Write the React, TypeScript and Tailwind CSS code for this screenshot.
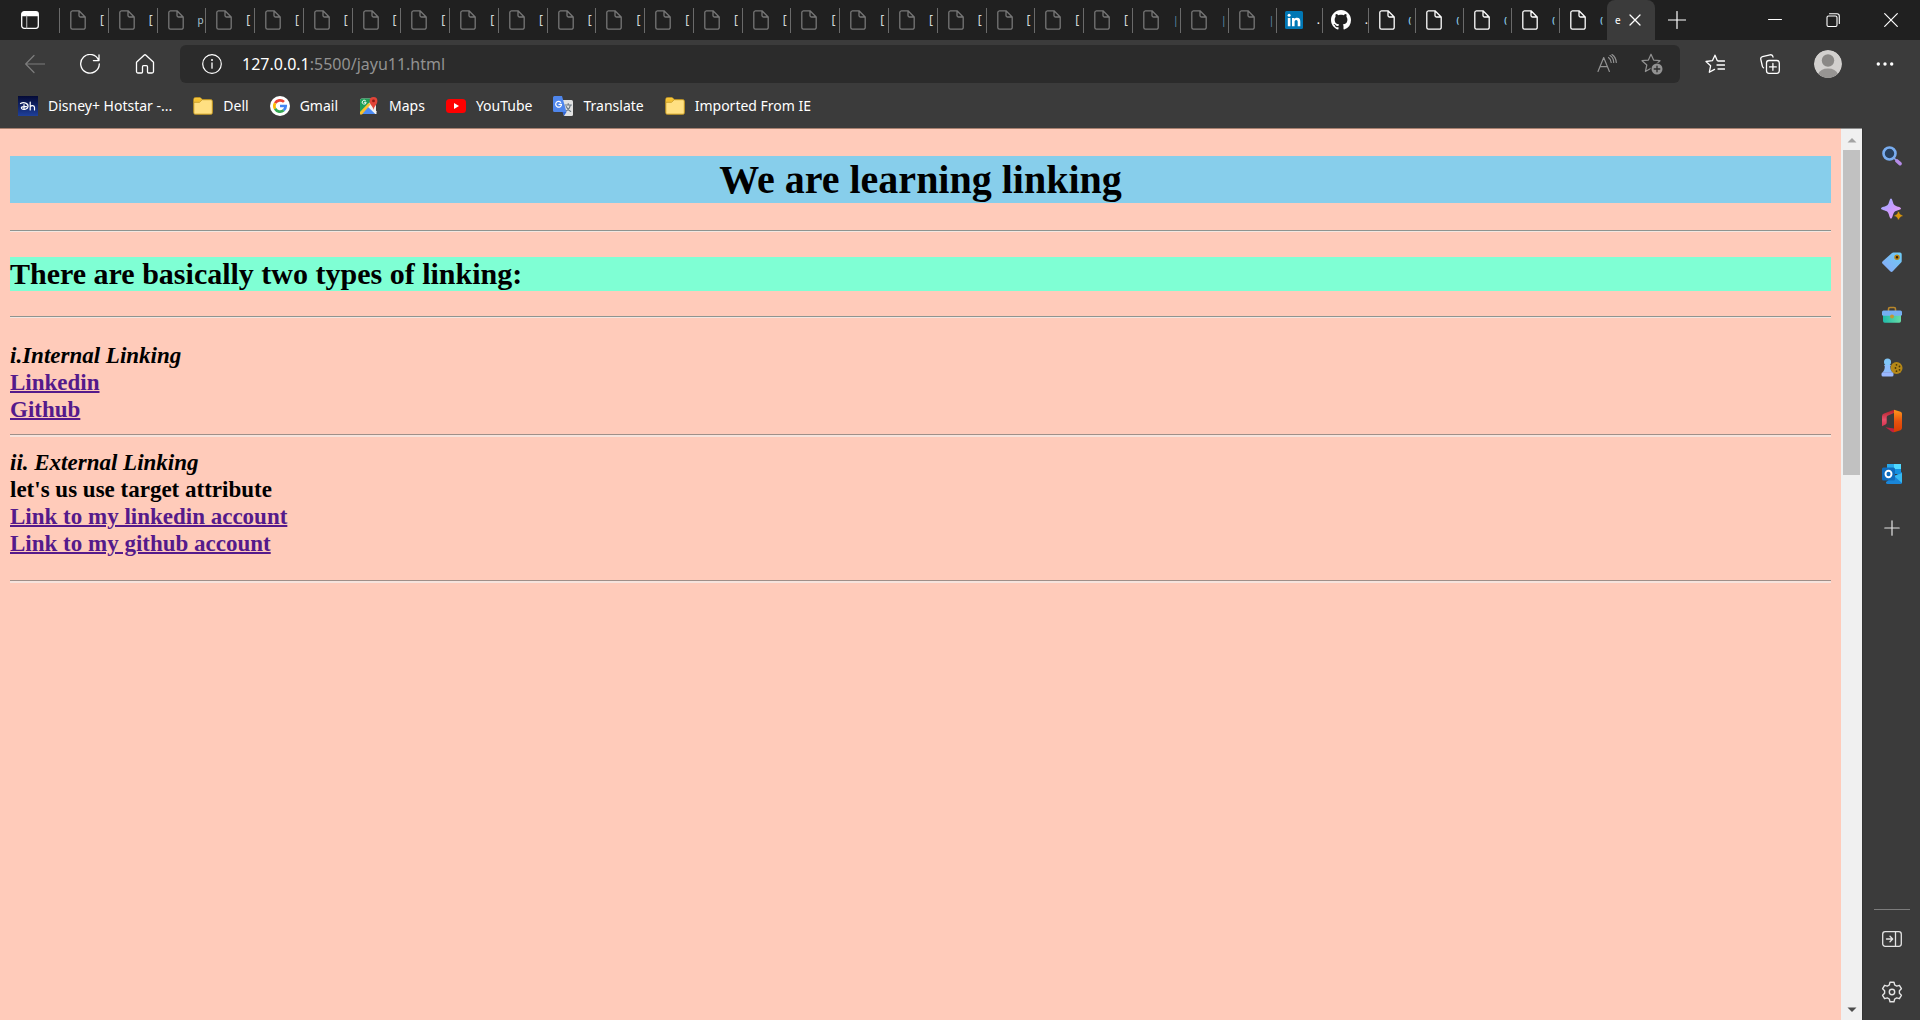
import type { ReactNode } from "react";

function Svg({ box = 20, className = "size-5", children }: { box?: number; className?: string; children: ReactNode }) {
  return (
    <svg viewBox={`0 0 ${box} ${box}`} className={className} fill="none" strokeLinecap="round" strokeLinejoin="round" aria-hidden="true">
      {children}
    </svg>
  );
}

function PageIcon() {
  return (
    <svg viewBox="0 0 16 20" className="h-5 w-4 shrink-0" fill="none" stroke="currentColor" strokeWidth="1.3" strokeLinejoin="round" aria-hidden="true">
      <path d="M2.5.8H9L15.2 7v10.4a1.8 1.8 0 0 1-1.8 1.8H2.5A1.8 1.8 0 0 1 .8 17.4V2.6A1.8 1.8 0 0 1 2.5.8ZM9 .8v4.6A1.6 1.6 0 0 0 10.600 7h4.600" />
    </svg>
  );
}

function LinkedinIcon() {
  return (
    <Svg box={18} className="size-[18px] shrink-0">
      <rect width="18" height="18" rx="1.5" fill="#0077b5" />
      <circle cx="4.100" cy="4.200" r="1.500" fill="#fff" />
      <path d="M2.800 6.900h2.600v8.300H2.800ZM7 6.900h2.500V8c.5-.8 1.400-1.300 2.600-1.300 2.500 0 3.200 1.600 3.200 4v4.500h-2.600v-4.100c0-1.200-.2-2.200-1.500-2.200s-1.600 1-1.600 2.200v4.100H7Z" fill="#fff" />
    </Svg>
  );
}

function GithubIcon() {
  return (
    <Svg box={16} className="size-5 shrink-0">
      <path
        fill="#fff"
        d="M8 0C3.580 0 0 3.580 0 8c0 3.540 2.290 6.530 5.470 7.590.4.070.55-.17.55-.38 0-.19-.01-.82-.01-1.490-2.010.37-2.530-.49-2.690-.94-.09-.23-.48-.94-.82-1.130-.28-.15-.68-.52-.01-.53.63-.01 1.080.58 1.230.82.72 1.210 1.870.87 2.330.66.07-.52.28-.87.51-1.070-1.780-.2-3.640-.89-3.640-3.950 0-.87.31-1.590.82-2.150-.08-.2-.36-1.020.08-2.120 0 0 .67-.21 2.200.82.64-.18 1.320-.27 2-.27s1.360.09 2 .27c1.530-1.040 2.200-.82 2.200-.82.44 1.100.16 1.920.08 2.120.51.56.82 1.270.82 2.150 0 3.070-1.870 3.750-3.650 3.950.29.25.54.73.54 1.480 0 1.070-.01 1.930-.01 2.200 0 .21.15.46.55.38A8.010 8.010 0 0 0 16 8c0-4.420-3.580-8-8-8Z"
      />
    </Svg>
  );
}

type Tab = { title: string; icon?: "linkedin" | "github"; awake?: boolean };

const olderTabs: Tab[] = Array.from({ length: 22 }, (_, i) => ({ title: i === 2 ? "p" : "[" }));
const newerTabs: Tab[] = [
  { title: "|" },
  { title: "|" },
  { title: "|" },
  { title: ".", icon: "linkedin", awake: true },
  { title: ".", icon: "github", awake: true },
  { title: "(", awake: true },
  { title: "(", awake: true },
  { title: "(", awake: true },
  { title: "(", awake: true },
  { title: "(", awake: true },
];

const titleStyle: Record<string, string> = {
  "[": "text-xs text-[#d5dcdc]",
  p: "text-[10px] text-[#a9c4d4]",
  "|": "text-[10px] text-[#5f8fae]",
  ".": "text-xs text-white",
  "(": "text-[8px] font-bold text-[#8fd0ee]",
};

function TabButton({ tab }: { tab: Tab }) {
  return (
    <button type="button" className={`flex h-[25px] min-w-0 flex-1 items-center border-l border-[#6a6a6a] ${tab.icon ? "pl-2" : "pl-2.5"} ${tab.awake ? "text-white" : "text-[#777]"}`}>
      {tab.icon === "linkedin" ? <LinkedinIcon /> : tab.icon === "github" ? <GithubIcon /> : <PageIcon />}
      <span className={`ml-3.5 shrink-0 text-left leading-5 ${titleStyle[tab.title]}`}>{tab.title}</span>
    </button>
  );
}

function TabBar() {
  return (
    <header className="flex h-10 items-center bg-[#202020]">
      <button type="button" aria-label="Tab actions" className="flex w-[59px] shrink-0 items-center pl-[21px]">
        <Svg box={18} className="size-[18px]">
          <rect x=".7" y=".7" width="16.600" height="16.600" rx="2.500" stroke="#fff" strokeWidth="1.300" />
          <path d="M.7 5.200V3.200A2.500 2.500 0 0 1 3.200.7h11.600a2.500 2.500 0 0 1 2.500 2.500v2Z" fill="#fff" />
          <path d="M5.700 5v12" stroke="#aaa" strokeWidth="1.200" />
        </Svg>
      </button>
      <div className="flex min-w-0 flex-[1073]">
        {olderTabs.map((tab, i) => (
          <TabButton key={i} tab={tab} />
        ))}
      </div>
      <div className="flex min-w-0 flex-[475]">
        {newerTabs.map((tab, i) => (
          <TabButton key={i} tab={tab} />
        ))}
      </div>
      <div className="flex h-10 w-12 shrink-0 items-center rounded-t-lg bg-[#3b3b3b] pl-2 text-white">
        <span className="text-[10px] leading-5">e</span>
        <button type="button" aria-label="Close tab" className="ml-2">
          <Svg box={12} className="size-3">
            <path d="m1 1 10 10M11 1 1 11" stroke="currentColor" strokeWidth="1.300" />
          </Svg>
        </button>
      </div>
      <button type="button" aria-label="New tab" className="mr-[47px] flex w-11 shrink-0 justify-center text-white">
        <Svg box={18} className="size-[18px]">
          <path d="M9 .5v17M.5 9h17" stroke="currentColor" strokeWidth="1.200" />
        </Svg>
      </button>
      <button type="button" aria-label="Minimize" className="flex w-[58px] shrink-0 justify-center text-white">
        <Svg box={14} className="size-3.5">
          <path d="M.5 6.500h13" stroke="currentColor" />
        </Svg>
      </button>
      <button type="button" aria-label="Restore" className="flex w-[58px] shrink-0 justify-center text-white">
        <Svg box={14} className="size-3.5">
          <rect x="1" y="3" width="10" height="10.500" rx="1.500" stroke="currentColor" strokeWidth="1.100" />
          <path d="M3.500.7H11A2.300 2.300 0 0 1 13.300 3v7.500" stroke="currentColor" strokeWidth="1.100" />
        </Svg>
      </button>
      <button type="button" aria-label="Close" className="flex w-[58px] shrink-0 justify-center text-white">
        <Svg box={14} className="size-3.5">
          <path d="m.7.7 12.600 12.600M13.300.7.7 13.300" stroke="currentColor" strokeWidth="1.200" />
        </Svg>
      </button>
    </header>
  );
}

const star = "M10 1.200 12.600 7.100 19 7.700 14.200 12 15.600 18.500 10 15.200 4.400 18.500 5.800 12 1 7.700 7.400 7.100Z";

function Toolbar() {
  return (
    <nav aria-label="Navigation" className="flex h-12 items-center pl-[7px] pr-2 text-white">
      <button type="button" aria-label="Back" className="flex w-[55px] justify-center text-[#7d7d7d]">
        <Svg>
          <path d="M19.500 10H.8M9 1.500.7 10 9 18.500" stroke="currentColor" strokeWidth="1.200" />
        </Svg>
      </button>
      <button type="button" aria-label="Refresh" className="flex w-[55px] justify-center">
        <Svg>
          <path d="M18.700 6.500A9.300 9.300 0 1 0 19.300 10M19 1v5.600h-5.600" stroke="currentColor" strokeWidth="1.300" />
        </Svg>
      </button>
      <button type="button" aria-label="Home" className="flex w-[55px] justify-center">
        <Svg>
          <path d="M1.500 8.300 9 1.200a1.500 1.500 0 0 1 2 0l7.500 7.100v9.200a1.500 1.500 0 0 1-1.500 1.500h-3.500a1 1 0 0 1-1-1v-5.300a1 1 0 0 0-1-1h-3a1 1 0 0 0-1 1V18a1 1 0 0 1-1 1H3a1.500 1.500 0 0 1-1.500-1.500Z" stroke="currentColor" strokeWidth="1.300" />
        </Svg>
      </button>
      <div className="ml-2 flex h-[38px] min-w-0 flex-1 items-center rounded-md bg-[#2b2b2b] pl-[22px] pr-[17px]">
        <button type="button" aria-label="Site information">
          <Svg>
            <circle cx="10" cy="10" r="9.300" stroke="currentColor" strokeWidth="1.200" />
            <path d="M10 9v5.200" stroke="currentColor" strokeWidth="1.300" />
            <circle cx="10" cy="6" r="1" fill="currentColor" />
          </Svg>
        </button>
        <a href="#address" className="ml-5 flex-1 text-base text-[#929292]">
          <span className="text-white">127.0.0.1</span>:5500/jayu11.html
        </a>
        <button type="button" aria-label="Read aloud" className="text-[#929292]">
          <Svg>
            <path d="m1 17.500 5.700-14 5.700 14M3 12.700h7.400M11.500 3.500c1.700 1.200 2.600 3 2.700 5M13 1.600c2.400 1.400 3.600 3.900 3.700 6.900M15 .6c2.600 1.800 4.100 4.600 4.300 7.900" stroke="currentColor" strokeWidth="1.200" />
          </Svg>
        </button>
        <button type="button" aria-label="Add to favorites" className="ml-6 text-[#929292]">
          <Svg box={22} className="size-[22px]">
            <path d={star} stroke="currentColor" strokeWidth="1.200" />
            <circle cx="16" cy="16" r="6.500" fill="#2b2b2b" />
            <circle cx="16" cy="16" r="5.500" fill="currentColor" />
            <path d="M16 13.200v5.600M13.200 16h5.600" stroke="#2b2b2b" strokeWidth="1.300" />
          </Svg>
        </button>
      </div>
      <button type="button" aria-label="Favorites" className="ml-2 flex w-[54px] justify-center">
        <Svg>
          <path d="M12.200 6.600 10 1.200 7.400 6.700 1 7.500l4.600 4.300L4.300 18.300l5.200-2.900M13 7h6.500M12 11h7.500M13 15h6.500" stroke="currentColor" strokeWidth="1.300" />
        </Svg>
      </button>
      <button type="button" aria-label="Collections" className="flex w-14 justify-center">
        <Svg>
          <rect x="6.500" y="6.500" width="12.800" height="12.800" rx="2.500" stroke="currentColor" strokeWidth="1.300" />
          <path d="M12.900 9.500v6.800M9.500 12.900h6.800M3.500 13.800A2.500 2.500 0 0 1 2.300 12L.8 5.300a2.300 2.300 0 0 1 1.700-2.700L10 .8c1.500-.3 2.700.5 3 2.200" stroke="currentColor" strokeWidth="1.300" />
        </Svg>
      </button>
      <button type="button" aria-label="Profile" className="flex w-[60px] justify-center">
        <Svg box={28} className="size-7 rounded-full">
          <circle cx="14" cy="14" r="14" fill="#d2d0ce" />
          <circle cx="14" cy="10.500" r="6.200" fill="#8a8886" />
          <path d="M4 24a10.500 8 0 0 1 20 0 14 14 0 0 1-20 0Z" fill="#979593" />
        </Svg>
      </button>
      <button type="button" aria-label="Settings and more" className="flex w-[54px] justify-center">
        <Svg>
          <circle cx="3.300" cy="10" r="1.700" fill="currentColor" />
          <circle cx="10" cy="10" r="1.700" fill="currentColor" />
          <circle cx="16.700" cy="10" r="1.700" fill="currentColor" />
        </Svg>
      </button>
    </nav>
  );
}

function FolderIcon() {
  return (
    <Svg>
      <path d="M.8 3.200c0-.9.5-1.500 1.500-1.500h5l2 2h8.500c1 0 1.500.6 1.500 1.500v11.500c0 1-.5 1.500-1.500 1.500H2.300c-1 0-1.500-.5-1.500-1.500Z" fill="#ffe082" stroke="#c99a1d" />
      <path d="M1.300 3.200c0-.7.300-1 1-1h4.800l1.600 1.500-2 2H1.300Z" fill="#f6c12e" />
      <path d="M1 6.200h5.500l2.500-2.400" stroke="#c99a1d" />
    </Svg>
  );
}

const bookmarks: { label: string; icon: ReactNode }[] = [
  {
    label: "Disney+ Hotstar -...",
    icon: (
      <Svg>
        <defs>
          <linearGradient id="hotstar" x2="0" y2="1">
            <stop stopColor="#040a36" />
            <stop offset="1" stopColor="#1e3f9a" />
          </linearGradient>
        </defs>
        <rect width="20" height="20" fill="url(#hotstar)" />
        <path d="M2.500 7.500C6 5.700 10.400 7.400 10 10.600c-.3 2.700-4.500 3.700-6.300 2-.9-1 .2-2 1.800-2h3M6 8.700v4.800M12.200 6v8M12.200 10.800c.8-1.500 4.300-1.800 4.300.8V14" stroke="#fff" strokeWidth="1.200" />
      </Svg>
    ),
  },
  { label: "Dell", icon: <FolderIcon /> },
  {
    label: "Gmail",
    icon: (
      <Svg>
        <circle cx="10" cy="10" r="10" fill="#fff" />
        <g strokeWidth="2.700" strokeLinecap="butt">
          <path d="M5.100 7.200a5.700 5.700 0 0 1 8.900-1.300" stroke="#ea4335" />
          <path d="M5.100 12.800a5.700 5.700 0 0 1 0-5.600" stroke="#fbbc05" />
          <path d="M13.700 14.300a5.700 5.700 0 0 1-8.600-1.500" stroke="#34a853" />
          <path d="M10 10h5.700a5.700 5.700 0 0 1-2 4.300" stroke="#4285f4" strokeLinejoin="miter" />
        </g>
      </Svg>
    ),
  },
  {
    label: "Maps",
    icon: (
      <Svg>
        <path d="M1 4.500A2 2 0 0 1 3 2.500h10L17 8v10H1Z" fill="#e9e9e9" />
        <path d="M1 4.500A2 2 0 0 1 3 2.500h9.500L9.500 9 1 17.500Z" fill="#1e9e57" />
        <path d="m1.200 18 7.300-7.700 8 7.700Z" fill="#4c8bf5" />
        <path d="m8.500 10.300 2-2.100 7 7v2.800h-1Z" fill="#f1f1f1" />
        <path d="m1 16 8.500-9 2 1.500L3 18.500H1Z" fill="#fbc02d" />
        <path d="M6.600 4.700a2 2 0 1 0 .6 1.600H5.300" stroke="#fff" strokeWidth=".9" />
        <path d="M14.500 14c-.3-3.500-3.900-5.500-3.900-9a3.900 3.900 0 0 1 7.800 0c0 3.500-3.600 5.500-3.900 9Z" fill="#e24438" />
        <circle cx="14.500" cy="4.900" r="1.400" fill="#8b1b14" />
      </Svg>
    ),
  },
  {
    label: "YouTube",
    icon: (
      <Svg>
        <rect y="3" width="20" height="14" rx="3.500" fill="#f00" />
        <path d="m8 7 5 3-5 3Z" fill="#fff" />
      </Svg>
    ),
  },
  {
    label: "Translate",
    icon: (
      <Svg>
        <path d="M8 4h10.500A1.500 1.500 0 0 1 20 5.500v13a1.500 1.500 0 0 1-1.500 1.500H11Z" fill="#e1e1e1" />
        <path d="M12 9h6.500M15.200 7.500V9M17.400 9c-.5 2.700-2.200 5-4.200 6M13.200 10.500c.8 2 2.300 3.800 4.500 5" stroke="#6b7780" strokeWidth="1.100" />
        <path d="M0 1.500A1.500 1.500 0 0 1 1.500 0H9l4.500 16H1.500A1.500 1.500 0 0 1 0 14.500Z" fill="#4f86ec" />
        <path d="m9.500 16 4 0L11 20Z" fill="#3367d6" />
        <path d="M7.700 6.300a2.900 2.900 0 1 0 .8 2.100H6" stroke="#fff" strokeWidth="1.200" />
      </Svg>
    ),
  },
  { label: "Imported From IE", icon: <FolderIcon /> },
];

function BookmarksBar() {
  return (
    <nav aria-label="Bookmarks" className="flex h-10 items-center gap-[21px] pb-1 pl-[18px]">
      {bookmarks.map(({ label, icon }) => (
        <a key={label} href="#bookmark" className="flex items-center gap-2.5 whitespace-nowrap text-sm text-white">
          {icon}
          {label}
        </a>
      ))}
    </nav>
  );
}

const thinRule = "h-0.5 border-t border-[#8e9490] bg-[#f3e6e0]";
const thickRule = "h-[3px] border-t border-[#a08f88] bg-[#f6e3dc]";

function WebPage() {
  return (
    <main className="min-w-0 flex-1 overflow-hidden border-t border-[#a8806f] bg-[#ffcbba] px-2.5 pt-[27px] font-['Liberation_Serif',serif] font-bold text-black">
      <h1 className="bg-[#87ceeb] text-center text-[40px] leading-[47px]">We are learning linking</h1>
      <hr className={`mt-[27px] ${thinRule}`} />
      <h2 className="mt-[25px] bg-[#7fffd4] text-[30px] leading-[34px]">There are basically two types of linking:</h2>
      <hr className={`mt-[25px] ${thinRule}`} />
      <section className="mt-6 flex flex-col items-start text-[23px] leading-[27px]">
        <h3 className="italic">i.Internal Linking</h3>
        <a href="#linkedin" className="text-[#551a8b] underline decoration-2">Linkedin</a>
        <a href="#github" className="text-[#551a8b] underline decoration-2">Github</a>
      </section>
      <hr className={`mt-[11px] ${thickRule}`} />
      <section className="mt-3 flex flex-col items-start text-[23px] leading-[27px]">
        <h3 className="italic">ii. External Linking</h3>
        <p>let's us use target attribute</p>
        <a href="#my-linkedin" className="text-[#551a8b] underline decoration-2">Link to my linkedin account</a>
        <a href="#my-github" className="text-[#551a8b] underline decoration-2">Link to my github account</a>
      </section>
      <hr className={`mt-[23px] ${thickRule}`} />
    </main>
  );
}

function Scrollbar() {
  return (
    <div className="flex w-[21px] shrink-0 flex-col items-center border-t border-[#8c8c8c] bg-[#f0f0f0]">
      <button type="button" aria-label="Scroll up" className="flex h-[21px] w-full shrink-0 items-center justify-center">
        <Svg box={10} className="size-2.5">
          <path d="M.5 7.500 5 3l4.500 4.500Z" fill="#a3a3a3" />
        </Svg>
      </button>
      <div className="w-[17px] flex-[325] bg-[#c1c1c1]" />
      <div className="flex-[524]" />
      <button type="button" aria-label="Scroll down" className="flex h-[21px] w-full shrink-0 items-center justify-center">
        <Svg box={10} className="size-2.5">
          <path d="M.5 2.500 5 7l4.500-4.500Z" fill="#4d4d4d" />
        </Svg>
      </button>
    </div>
  );
}

const sideApps: { label: string; icon: ReactNode }[] = [
  {
    label: "Search",
    icon: (
      <Svg>
        <circle cx="7.500" cy="7.500" r="6" fill="#28405c" stroke="#79adf0" strokeWidth="2.600" />
        <path d="m12 12 2.500 2.500" stroke="#8aa6e8" strokeWidth="1.500" />
        <path d="m15 15 3 2.700" stroke="#b58be8" strokeWidth="3.600" />
      </Svg>
    ),
  },
  {
    label: "Discover",
    icon: (
      <Svg box={22} className="size-[22px]">
        <defs>
          <linearGradient id="spark" x2="1" y2="1">
            <stop stopColor="#8fb4ff" />
            <stop offset=".5" stopColor="#c99bff" />
            <stop offset="1" stopColor="#e9a0f0" />
          </linearGradient>
        </defs>
        <path d="M10 .5c1.500 0 1.800 5 3.400 6.600s6.600 1.900 6.600 3.400-5 1.800-6.600 3.400-1.900 6.600-3.400 6.600-1.800-5-3.400-6.600S0 12 0 10.500s5-1.800 6.600-3.400S8.500.5 10 .5Z" fill="url(#spark)" />
        <path d="M17.500 13c.8 0 1 2.200 1.700 3s2.800 1 2.800 1.700-2.100 1-2.800 1.700-.9 2.600-1.700 2.600-1-1.900-1.700-2.600-2.800-1-2.800-1.700 2.100-.9 2.800-1.700.9-3 1.700-3Z" fill="#d9960c" stroke="#3b3b3b" strokeWidth=".6" />
      </Svg>
    ),
  },
  {
    label: "Shopping",
    icon: (
      <Svg>
        <defs>
          <linearGradient id="tag" x1="1" x2="0" y2="1">
            <stop stopColor="#6ccdf5" />
            <stop offset="1" stopColor="#89a8f7" />
          </linearGradient>
        </defs>
        <path d="M11.500.5 18 .5A1.700 1.700 0 0 1 19.700 2.200v7a2 2 0 0 1-.6 1.400l-8.300 8.700a1.800 1.800 0 0 1-2.600 0l-7.500-7.500a1.800 1.800 0 0 1 0-2.600L10 1a2 2 0 0 1 1.500-.5Z" fill="url(#tag)" />
        <circle cx="15" cy="5.200" r="2" fill="#33210c" stroke="#b98512" strokeWidth="1.500" />
      </Svg>
    ),
  },
  {
    label: "Tools",
    icon: (
      <Svg>
        <defs>
          <linearGradient id="toolbox">
            <stop stopColor="#20bbaa" />
            <stop offset="1" stopColor="#67dda7" />
          </linearGradient>
        </defs>
        <path d="M6.500 6V4a1.500 1.500 0 0 1 1.500-1.500h4A1.500 1.500 0 0 1 13.500 4v2" stroke="#b8862b" strokeWidth="1.600" />
        <path d="M1 9h18v7a1.700 1.700 0 0 1-1.700 1.700H2.700A1.700 1.700 0 0 1 1 16Z" fill="url(#toolbox)" />
        <rect y="5.500" width="20" height="5.200" rx="1.500" fill="#75aef2" />
        <circle cx="10" cy="11.500" r="2" fill="#c59732" />
      </Svg>
    ),
  },
  {
    label: "Games",
    icon: (
      <Svg box={22} className="size-[22px]">
        <circle cx="15.500" cy="11" r="6" fill="#b58818" />
        <g fill="#4c3808">
          <circle cx="15.500" cy="7.800" r=".9" />
          <circle cx="15.500" cy="14.200" r=".9" />
          <circle cx="18.500" cy="9.500" r=".9" />
          <circle cx="18.500" cy="12.800" r=".9" />
          <circle cx="14.500" cy="11" r=".9" />
        </g>
        <circle cx="6.500" cy="5" r="3.500" fill="#80c6f8" />
        <path d="M3 8h7l-.8 1.500c0 2.500.9 4.600 2.300 6h-10c1.400-1.400 2.300-3.500 2.300-6Z" fill="#8dbcfa" />
        <rect x=".5" y="15.200" width="12" height="4.300" rx="1.500" fill="#9ab8ff" />
      </Svg>
    ),
  },
  {
    label: "Office",
    icon: (
      <Svg box={24} className="size-6">
        <defs>
          <linearGradient id="officeLeft" x2="0" y2="1">
            <stop stopColor="#b01e28" />
            <stop offset=".6" stopColor="#e8506a" />
            <stop offset="1" stopColor="#d53250" />
          </linearGradient>
          <linearGradient id="officeRight" x2="0" y2="1">
            <stop stopColor="#ff9a1c" />
            <stop offset=".5" stopColor="#e8530e" />
            <stop offset="1" stopColor="#d83b01" />
          </linearGradient>
        </defs>
        <path d="M14 .7 4 4.500A3 3 0 0 0 2 7.300v9.900l3.500-1.700a2 2 0 0 0 1.200-1.900V8.300c0-.9.500-1.600 1.300-1.900L14 4Z" fill="url(#officeLeft)" />
        <path d="m14 .7 6.500 2A2.200 2.200 0 0 1 22 4.800v14.300a2.200 2.200 0 0 1-1.500 2.100L14 23.300Z" fill="url(#officeRight)" />
        <path d="M14 19.500 5.500 18.300 11.800 22.700c.8.500 1.300.8 2.200.6Z" fill="#c2203f" />
      </Svg>
    ),
  },
  {
    label: "Outlook",
    icon: (
      <Svg>
        <path d="M5 0h14v10H5Z" fill="#1490df" />
        <path d="M12 0h7v5h-7Z" fill="#50d9ff" />
        <path d="M5 0h7v5H5Z" fill="#28a8ea" />
        <path d="m4 18 8.500-6L20 8v10.500a1.500 1.500 0 0 1-1.500 1.500h-13A1.500 1.500 0 0 1 4 18.500Z" fill="#1a86d9" />
        <path d="m12 12 8 7V9Z" fill="#35b8f1" />
        <rect y="3.500" width="13" height="13" rx="1.500" fill="#0f6cbd" />
        <ellipse cx="6.500" cy="10" rx="3" ry="3.300" stroke="#fff" strokeWidth="1.900" />
      </Svg>
    ),
  },
];

function Sidebar() {
  return (
    <aside aria-label="Sidebar" className="flex w-[58px] shrink-0 flex-col items-center border-l border-[#333] bg-[#3b3b3b] pt-px text-[#e4e4e4]">
      {sideApps.map(({ label, icon }) => (
        <button key={label} type="button" aria-label={label} className="flex h-[53px] w-full shrink-0 items-center justify-center">
          {icon}
        </button>
      ))}
      <button type="button" aria-label="Customize" className="flex h-14 w-full shrink-0 items-center justify-center">
        <Svg box={16} className="size-4">
          <path d="M8 .8v14.400M.8 8h14.400" stroke="currentColor" strokeWidth="1.200" />
        </Svg>
      </button>
      <div className="mt-auto w-9 border-t border-[#7c7c7c]" />
      <button type="button" aria-label="Hide sidebar" className="mt-0.5 flex h-[53px] w-full shrink-0 items-center justify-center">
        <Svg>
          <rect x=".7" y="2.700" width="18.600" height="14.600" rx="2.500" stroke="currentColor" strokeWidth="1.300" />
          <path d="M13.500 3v14M4.500 10h6M8 7.300l2.700 2.700L8 12.700" stroke="currentColor" strokeWidth="1.300" />
        </Svg>
      </button>
      <button type="button" aria-label="Settings" className="mb-0.5 flex h-[53px] w-full shrink-0 items-center justify-center">
        <Svg box={22} className="size-[22px]">
          <path d="M9 1.200h4l.7 2.800 2 1.100 2.700-.8 2 3.400-2 2v2.600l2 2-2 3.400-2.700-.8-2 1.100-.7 2.800H9L8.300 18l-2-1.100-2.700.8-2-3.400 2-2V9.700l-2-2 2-3.400 2.700.8 2-1.100Z" stroke="currentColor" strokeWidth="1.400" />
          <circle cx="11" cy="11" r="2.700" stroke="currentColor" strokeWidth="1.400" />
        </Svg>
      </button>
    </aside>
  );
}

export default function App() {
  return (
    <div className="flex h-screen flex-col overflow-hidden bg-[#3b3b3b] font-['Noto_Sans',sans-serif]">
      <TabBar />
      <Toolbar />
      <BookmarksBar />
      <div className="flex min-h-0 flex-1">
        <WebPage />
        <Scrollbar />
        <Sidebar />
      </div>
    </div>
  );
}
